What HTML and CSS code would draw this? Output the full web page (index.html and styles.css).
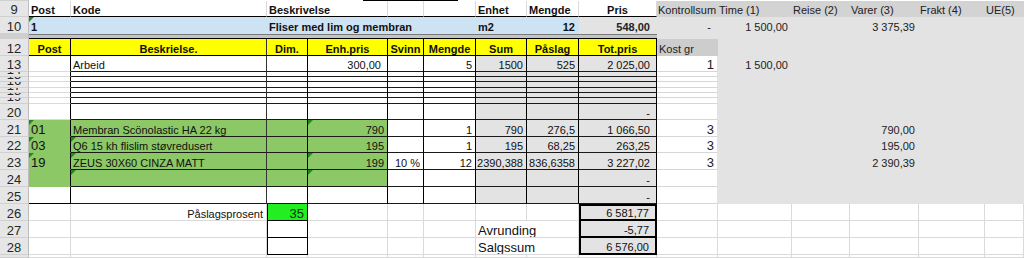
FILE: index.html
```html
<!DOCTYPE html>
<html lang="no">
<head>
<meta charset="utf-8">
<title>Kalkyle</title>
<link rel="stylesheet" href="styles.css">
</head>
<body>
<div class="sheet">
  <div class="row r1">
    <div class="c hd"></div>
    <div class="c top"><div class="topbar"></div></div>
  </div>

  <div class="row r16">
    <div class="c hd">9</div>
    <div class="c h9 b">Post</div>
    <div class="c h9 b">Kode</div>
    <div class="c h9 b s2">Beskrivelse</div>
    <div class="c h9"></div>
    <div class="c h9"></div>
    <div class="c h9 b">Enhet</div>
    <div class="c h9 b">Mengde</div>
    <div class="c h9 b ct">Pris</div>
    <div class="c gh">Kontrollsum</div>
    <div class="c gh">Time (1)</div>
    <div class="c gh">Reise (2)</div>
    <div class="c gh">Varer (3)</div>
    <div class="c gh">Frakt (4)</div>
    <div class="c gh">UE(5)</div>
  </div>

  <div class="row r17">
    <div class="c hd">10</div>
    <div class="c bl b tri">1</div>
    <div class="c bl"></div>
    <div class="c bl b s4">Fliser med lim og membran</div>
    <div class="c bl b">m2</div>
    <div class="c bl b rt">12</div>
    <div class="c g b rt ac">548,00</div>
    <div class="c g rt dash">-</div>
    <div class="c g rt">1 500,00</div>
    <div class="c g"></div>
    <div class="c g rt">3 375,39</div>
    <div class="c g"></div>
    <div class="c g"></div>
  </div>

  <div class="row r5">
    <div class="c hd hsep"></div>
    <div class="c sep s9"></div>
    <div class="c g"></div>
    <div class="c g"></div>
    <div class="c g"></div>
    <div class="c g"></div>
    <div class="c g"></div>
    <div class="c g"></div>
  </div>

  <div class="row r17">
    <div class="c hd">12</div>
    <div class="c y">Post</div>
    <div class="c y yb">Beskrielse.</div>
    <div class="c y">Dim.</div>
    <div class="c y">Enh.pris</div>
    <div class="c y">Svinn</div>
    <div class="c y">Mengde</div>
    <div class="c y">Sum</div>
    <div class="c y">Påslag</div>
    <div class="c y">Tot.pris</div>
    <div class="c kg">Kost gr</div>
    <div class="c g"></div>
    <div class="c g"></div>
    <div class="c g"></div>
    <div class="c g"></div>
    <div class="c g"></div>
  </div>

  <div class="row r16">
    <div class="c hd">13</div>
    <div class="c ta"></div>
    <div class="c t tb">Arbeid</div>
    <div class="c t"></div>
    <div class="c t rt ac">300,00</div>
    <div class="c t"></div>
    <div class="c t rt">5</div>
    <div class="c t sg rt">1500</div>
    <div class="c t sg rt">525</div>
    <div class="c t sg rt ac">2 025,00</div>
    <div class="c jw rt big">1</div>
    <div class="c g rt">1 500,00</div>
    <div class="c g"></div>
    <div class="c g"></div>
    <div class="c g"></div>
    <div class="c g"></div>
  </div>

  <div class="row r5">
    <div class="c hd">14</div>
    <div class="c ta"></div><div class="c t tb"></div><div class="c t"></div><div class="c t"></div><div class="c t"></div><div class="c t"></div>
    <div class="c t sg"></div><div class="c t sg"></div><div class="c t sg"></div>
    <div class="c jw"></div><div class="c g"></div><div class="c g"></div><div class="c g"></div><div class="c g"></div><div class="c g"></div>
  </div>
  <div class="row r5">
    <div class="c hd">15</div>
    <div class="c ta"></div><div class="c t tb"></div><div class="c t"></div><div class="c t"></div><div class="c t"></div><div class="c t"></div>
    <div class="c t sg"></div><div class="c t sg"></div><div class="c t sg"></div>
    <div class="c jw"></div><div class="c g"></div><div class="c g"></div><div class="c g"></div><div class="c g"></div><div class="c g"></div>
  </div>
  <div class="row r6">
    <div class="c hd">16</div>
    <div class="c ta"></div><div class="c t tb"></div><div class="c t"></div><div class="c t"></div><div class="c t"></div><div class="c t"></div>
    <div class="c t sg"></div><div class="c t sg"></div><div class="c t sg"></div>
    <div class="c jw"></div><div class="c g"></div><div class="c g"></div><div class="c g"></div><div class="c g"></div><div class="c g"></div>
  </div>
  <div class="row r5">
    <div class="c hd">17</div>
    <div class="c ta"></div><div class="c t tb"></div><div class="c t"></div><div class="c t"></div><div class="c t"></div><div class="c t"></div>
    <div class="c t sg"></div><div class="c t sg"></div><div class="c t sg"></div>
    <div class="c jw"></div><div class="c g"></div><div class="c g"></div><div class="c g"></div><div class="c g"></div><div class="c g"></div>
  </div>
  <div class="row r5">
    <div class="c hd">18</div>
    <div class="c ta"></div><div class="c t tb"></div><div class="c t"></div><div class="c t"></div><div class="c t"></div><div class="c t"></div>
    <div class="c t sg"></div><div class="c t sg"></div><div class="c t sg"></div>
    <div class="c jw"></div><div class="c g"></div><div class="c g"></div><div class="c g"></div><div class="c g"></div><div class="c g"></div>
  </div>
  <div class="row r6">
    <div class="c hd">19</div>
    <div class="c ta"></div><div class="c t tb"></div><div class="c t"></div><div class="c t"></div><div class="c t"></div><div class="c t"></div>
    <div class="c t sg"></div><div class="c t sg"></div><div class="c t sg"></div>
    <div class="c jw"></div><div class="c g"></div><div class="c g"></div><div class="c g"></div><div class="c g"></div><div class="c g"></div>
  </div>

  <div class="row r16">
    <div class="c hd">20</div>
    <div class="c ta"></div><div class="c t tb"></div><div class="c t"></div><div class="c t"></div><div class="c t"></div><div class="c t"></div>
    <div class="c t sg"></div><div class="c t sg"></div><div class="c t sg rt dash">-</div>
    <div class="c jw"></div><div class="c g"></div><div class="c g"></div><div class="c g"></div><div class="c g"></div><div class="c g"></div>
  </div>

  <div class="row r17">
    <div class="c hd">21</div>
    <div class="c ta gr big tri">01</div>
    <div class="c t tb gr">Membran Scönolastic HA 22 kg</div>
    <div class="c t gr"></div>
    <div class="c t gr rt tri">790</div>
    <div class="c t"></div>
    <div class="c t rt">1</div>
    <div class="c t sg rt">790</div>
    <div class="c t sg rt">276,5</div>
    <div class="c t sg rt ac">1 066,50</div>
    <div class="c jw rt big">3</div>
    <div class="c g"></div>
    <div class="c g"></div>
    <div class="c g rt">790,00</div>
    <div class="c g"></div>
    <div class="c g"></div>
  </div>

  <div class="row r16">
    <div class="c hd">22</div>
    <div class="c ta gr big tri">03</div>
    <div class="c t tb gr tri">Q6 15 kh flislim støvredusert</div>
    <div class="c t gr"></div>
    <div class="c t gr rt">195</div>
    <div class="c t"></div>
    <div class="c t rt">1</div>
    <div class="c t sg rt">195</div>
    <div class="c t sg rt">68,25</div>
    <div class="c t sg rt ac">263,25</div>
    <div class="c jw rt big">3</div>
    <div class="c g"></div>
    <div class="c g"></div>
    <div class="c g rt">195,00</div>
    <div class="c g"></div>
    <div class="c g"></div>
  </div>

  <div class="row r17">
    <div class="c hd">23</div>
    <div class="c ta gr big tri">19</div>
    <div class="c t tb gr tri">ZEUS 30X60 CINZA MATT</div>
    <div class="c t gr"></div>
    <div class="c t gr rt tri">199</div>
    <div class="c t rt">10 %</div>
    <div class="c t rt">12</div>
    <div class="c t sg rt">2390,388</div>
    <div class="c t sg rt">836,6358</div>
    <div class="c t sg rt ac">3 227,02</div>
    <div class="c jw rt big">3</div>
    <div class="c g"></div>
    <div class="c g"></div>
    <div class="c g rt">2 390,39</div>
    <div class="c g"></div>
    <div class="c g"></div>
  </div>

  <div class="row r17">
    <div class="c hd">24</div>
    <div class="c ta gr"></div>
    <div class="c t tb gr tri"></div>
    <div class="c t gr"></div>
    <div class="c t gr tri"></div>
    <div class="c t"></div>
    <div class="c t"></div>
    <div class="c t sg"></div>
    <div class="c t sg"></div>
    <div class="c t sg rt dash">-</div>
    <div class="c jw"></div>
    <div class="c g"></div><div class="c g"></div><div class="c g"></div><div class="c g"></div><div class="c g"></div>
  </div>

  <div class="row r17">
    <div class="c hd">25</div>
    <div class="c ta end"></div>
    <div class="c t tb"></div>
    <div class="c t"></div>
    <div class="c t"></div>
    <div class="c t"></div>
    <div class="c t"></div>
    <div class="c t sg"></div>
    <div class="c t sg"></div>
    <div class="c t sg rt dash">-</div>
    <div class="c jw"></div>
    <div class="c g"></div><div class="c g"></div><div class="c g"></div><div class="c g"></div><div class="c g"></div>
  </div>

  <div class="row r17">
    <div class="c hd">26</div>
    <div class="c"></div>
    <div class="c rt">Påslagsprosent</div>
    <div class="c cb pct rt big">35</div>
    <div class="c"></div>
    <div class="c"></div>
    <div class="c"></div>
    <div class="c"></div>
    <div class="c"></div>
    <div class="c bx bx1 rt ac">6 581,77</div>
    <div class="c"></div><div class="c"></div><div class="c"></div><div class="c"></div><div class="c"></div><div class="c"></div>
  </div>

  <div class="row r17">
    <div class="c hd">27</div>
    <div class="c"></div>
    <div class="c"></div>
    <div class="c cb"></div>
    <div class="c"></div>
    <div class="c"></div>
    <div class="c"></div>
    <div class="c big s2 lbl">Avrunding</div>
    <div class="c bx rt ac">-5,77</div>
    <div class="c"></div><div class="c"></div><div class="c"></div><div class="c"></div><div class="c"></div><div class="c"></div>
  </div>

  <div class="row r17">
    <div class="c hd">28</div>
    <div class="c"></div>
    <div class="c"></div>
    <div class="c cb"></div>
    <div class="c"></div>
    <div class="c"></div>
    <div class="c"></div>
    <div class="c big s2 lbl">Salgssum</div>
    <div class="c bx rt ac">6 576,00</div>
    <div class="c"></div><div class="c"></div><div class="c"></div><div class="c"></div><div class="c"></div><div class="c"></div>
  </div>

  <div class="row r3">
    <div class="c hd"></div>
    <div class="c"></div><div class="c"></div><div class="c"></div><div class="c"></div><div class="c"></div>
    <div class="c"></div><div class="c"></div><div class="c"></div><div class="c"></div><div class="c"></div>
    <div class="c"></div><div class="c"></div><div class="c"></div><div class="c"></div><div class="c"></div>
  </div>
</div>
</body>
</html>
```
FILE: styles.css
```css
html, body {
  margin: 0;
  padding: 0;
  background: #fff;
}
body {
  font-family: "Liberation Sans", Arial, sans-serif;
  color: #111;
}
.sheet {
  width: 1024px;
  height: 258px;
  overflow: hidden;
}
.row {
  display: grid;
  grid-template-columns: 29px 42px 196px 41px 80px 36px 52px 51px 52px 78px 61px 74px 58px 69px 66px 39px;
}
.r1 { height: 1px; }
.r3 { height: 3px; }
.r5 { height: 5px; }
.r6 { height: 6px; }
.r16 { height: 16px; }
.r17 { height: 17px; }

.c {
  box-sizing: border-box;
  min-width: 0;
  position: relative;
  display: flex;
  align-items: flex-end;
  padding: 0 2px;
  border-right: 1px solid #dadada;
  border-bottom: 1px solid #dadada;
  background: #fff;
  font-size: 11px;
  line-height: 11px;
  white-space: nowrap;
  overflow: hidden;
}

.s2 { grid-column: span 2; }
.s4 { grid-column: span 4; }
.s9 { grid-column: span 9; }

.b { font-weight: bold; }
.rt { justify-content: flex-end; padding-right: 3px; }
.ac { padding-right: 6px; }
.dash { padding-right: 6px; }
.ct { justify-content: center; }
.big { font-size: 13px; line-height: 13px; }

/* row header column */
.hd {
  background: #e6e6e6;
  border-right: 1px solid #bdbdbd;
  border-bottom: 1px solid #d0d0d0;
  justify-content: center;
  padding: 0;
  font-size: 13px;
  line-height: 13px;
  color: #262626;
}
.hsep { background: #cfcfcf; }

/* hidden row 8 */
.top {
  grid-column: span 15;
  border: none;
  padding: 0;
  align-items: stretch;
}
.topbar {
  margin-left: 334px;
  width: 95px;
  background: #000;
}

/* row 9 */
.h9 { border-bottom: 1px solid #000; }
.gh {
  background: #d3d3d3;
  border-color: #d3d3d3;
  padding-left: 1px;
  color: #222;
}

/* grey area */
.g {
  background: #e3e3e3;
  border-color: #e3e3e3;
  color: #222;
}

/* row 10 blue */
.bl {
  background: #cde3f3;
  border-color: #cde3f3;
}

/* row 11 separator */
.sep {
  background: #c4c4c4;
  border-top: 1px solid #7a7a7a;
  border-bottom: 1px solid #000;
  border-right: none;
}

/* row 12 yellow heading */
.y {
  background: #ffff00;
  border-right: 1px solid #000;
  border-bottom: 1px solid #000;
  font-weight: bold;
  justify-content: center;
}
.yb { border-right-color: #333; }
.kg {
  background: #cdcdcd;
  border-color: #cdcdcd;
  color: #222;
}

/* main table body */
.ta { border-right: 1px solid #000; }
.t {
  border-right: 1px solid #000;
  border-bottom: 1px solid #1a1a1a;
}
.tb { border-right-color: #333; }
.sg { background: #e3e3e3; }
.gr { background: #8cc866; }
.ta.gr { border-bottom-color: #8cc866; }
.end { border-bottom: 1px solid #000; }
.jw {
  border-right-color: #e3e3e3;
  border-bottom-color: #d6d6d6;
  color: #222;
}

/* totals */
.cb {
  border: 1px solid #000;
  border-top: none;
}
.pct {
  background: #22ee22;
  color: #143214;
}
.bx {
  background: #e3e3e3;
  border: 2px solid #000;
  border-top: none;
}
.bx1 { border-top: 2px solid #000; }
.lbl { padding-left: 2px; }

/* comment markers */
.tri::before {
  content: "";
  position: absolute;
  left: 0;
  top: 0;
  border-top: 5px solid #1f8a1f;
  border-right: 5px solid transparent;
}
```
